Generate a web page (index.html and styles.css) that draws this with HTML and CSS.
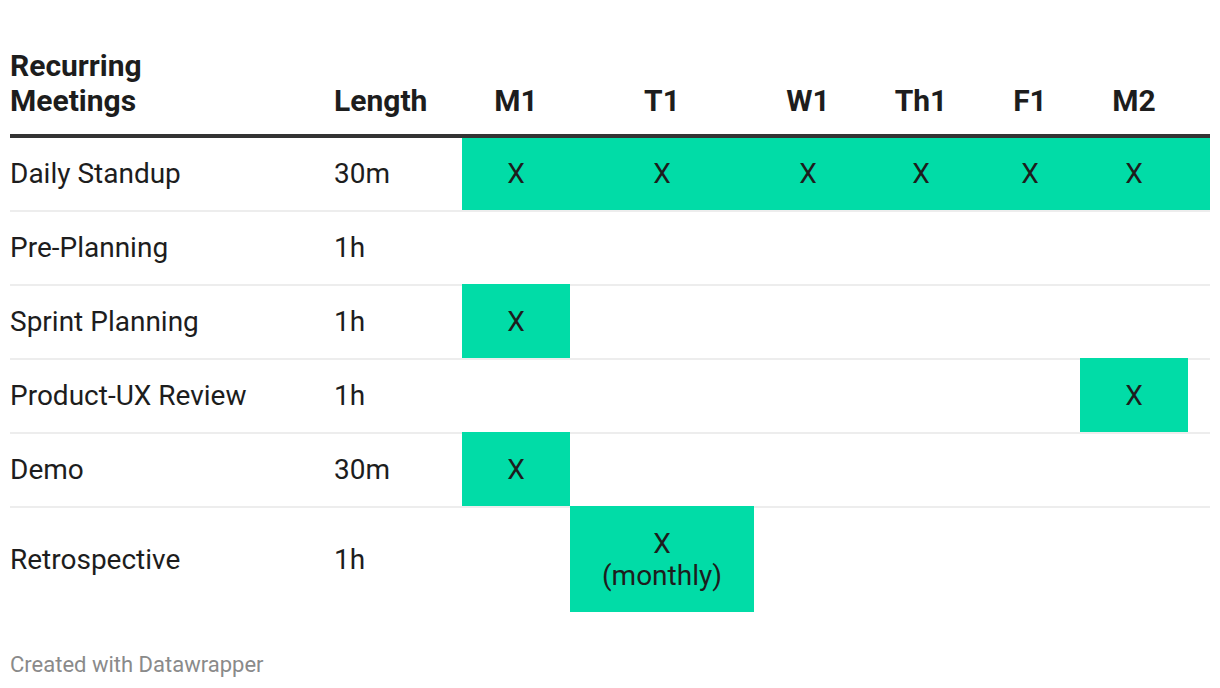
FILE: index.html
```html
<!DOCTYPE html>
<html lang="en">
<head>
<meta charset="utf-8">
<title>Recurring Meetings</title>
<link rel="stylesheet" href="styles.css">
</head>
<body>
<div class="chart">
  <table class="grid">
    <colgroup>
      <col class="c-name">
      <col class="c-len">
      <col class="c-m1">
      <col class="c-t1">
      <col class="c-w1">
      <col class="c-th1">
      <col class="c-f1">
      <col class="c-m2">
      <col class="c-pad">
    </colgroup>
    <thead>
      <tr>
        <th class="name">Recurring<br>Meetings</th>
        <th class="len">Length</th>
        <th class="day">M1</th>
        <th class="day">T1</th>
        <th class="day">W1</th>
        <th class="day">Th1</th>
        <th class="day">F1</th>
        <th class="day">M2</th>
        <th class="day"></th>
      </tr>
    </thead>
    <tbody>
      <tr>
        <td class="name">Daily Standup</td>
        <td class="len">30m</td>
        <td class="day on">X</td>
        <td class="day on">X</td>
        <td class="day on">X</td>
        <td class="day on">X</td>
        <td class="day on">X</td>
        <td class="day on">X</td>
        <td class="day on"></td>
      </tr>
      <tr>
        <td class="name">Pre-Planning</td>
        <td class="len">1h</td>
        <td class="day"></td>
        <td class="day"></td>
        <td class="day"></td>
        <td class="day"></td>
        <td class="day"></td>
        <td class="day"></td>
        <td class="day"></td>
      </tr>
      <tr>
        <td class="name">Sprint Planning</td>
        <td class="len">1h</td>
        <td class="day on">X</td>
        <td class="day"></td>
        <td class="day"></td>
        <td class="day"></td>
        <td class="day"></td>
        <td class="day"></td>
        <td class="day"></td>
      </tr>
      <tr>
        <td class="name">Product-UX Review</td>
        <td class="len">1h</td>
        <td class="day"></td>
        <td class="day"></td>
        <td class="day"></td>
        <td class="day"></td>
        <td class="day"></td>
        <td class="day on">X</td>
        <td class="day"></td>
      </tr>
      <tr>
        <td class="name">Demo</td>
        <td class="len">30m</td>
        <td class="day on">X</td>
        <td class="day"></td>
        <td class="day"></td>
        <td class="day"></td>
        <td class="day"></td>
        <td class="day"></td>
        <td class="day"></td>
      </tr>
      <tr>
        <td class="name">Retrospective</td>
        <td class="len">1h</td>
        <td class="day"></td>
        <td class="day on">X<br>(monthly)</td>
        <td class="day"></td>
        <td class="day"></td>
        <td class="day"></td>
        <td class="day"></td>
        <td class="day"></td>
      </tr>
    </tbody>
  </table>
  <footer class="credit">Created with Datawrapper</footer>
</div>
</body>
</html>
```

FILE: styles.css
```css
html, body {
  margin: 0;
  padding: 0;
  background: #ffffff;
}

.chart {
  padding: 40px 10px 0 10px;
  font-family: Roboto, "Liberation Sans", Arial, sans-serif;
  color: #1d1d1d;
}

.grid {
  width: 1200px;
  table-layout: fixed;
  border-collapse: separate;
  border-spacing: 0;
}

.c-name { width: 314px; }
.c-len { width: 138px; }
.c-m1 { width: 108px; }
.c-t1 { width: 184px; }
.c-w1 { width: 108px; }
.c-th1 { width: 118px; }
.c-f1 { width: 100px; }
.c-m2 { width: 108px; }
.c-pad { width: 22px; }

.grid th {
  font-size: 30px;
  line-height: 35px;
  font-weight: 700;
  vertical-align: bottom;
  padding: 8px 10px 16px 10px;
  border-bottom: 4px solid #333333;
  text-align: center;
}

.grid td {
  font-size: 28px;
  line-height: 32px;
  font-weight: 400;
  padding: 20px 10px;
  vertical-align: middle;
  border-top: 2px solid #ededed;
}

.grid tbody tr:first-child td {
  border-top: none;
}

.grid .name {
  text-align: left;
  padding-left: 0;
}

.grid .len {
  text-align: left;
}

.grid .day {
  text-align: center;
}

.grid td.on {
  background: #01dca7;
  border-top-color: transparent;
}

.credit {
  margin-top: 40px;
  font-size: 22px;
  line-height: 26px;
  color: #8a8a8a;
}
```
